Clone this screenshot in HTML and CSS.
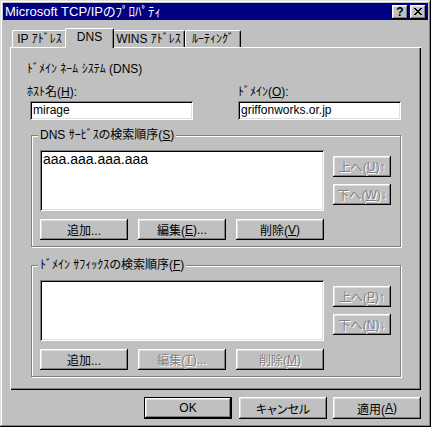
FILE: index.html
```html
<!DOCTYPE html>
<html lang="ja">
<head>
    <meta charset="UTF-8">
    <title>Microsoft TCP/IPのﾌﾟﾛﾊﾟﾃｨ</title>
    <link rel="stylesheet" href="styles.css">
</head>
<body>
<div class="window">
    <div class="titlebar">
        <span class="title">Microsoft TCP/IPのﾌﾟﾛﾊﾟﾃｨ</span>
        <span class="caption-btn help">?</span>
        <span class="caption-btn close">
            <svg width="8" height="7" viewBox="0 0 8 7" shape-rendering="crispEdges">
                <path d="M0 0h2v1h-2zM6 0h2v1h-2zM1 1h2v1h-2zM5 1h2v1h-2zM2 2h4v1h-4zM3 3h2v1h-2zM2 4h4v1h-4zM1 5h2v1h-2zM5 5h2v1h-2zM0 6h2v1h-2zM6 6h2v1h-2z" fill="#000"/>
            </svg>
        </span>
    </div>

    <div class="content">
        <div class="tabs">
            <div class="tab tab-ip">IP ｱﾄﾞﾚｽ</div>
            <div class="tab tab-dns active">DNS</div>
            <div class="tab tab-wins">WINS ｱﾄﾞﾚｽ</div>
            <div class="tab tab-route">ﾙｰﾃｨﾝｸﾞ</div>
        </div>

        <div class="panel">
            <div class="dns-title">ﾄﾞﾒｲﾝ ﾈｰﾑ ｼｽﾃﾑ (DNS)</div>

            <div class="fields">
                <div class="field host">
                    <div class="field-label">ﾎｽﾄ名(<u>H</u>):</div>
                    <div class="text-input">mirage</div>
                </div>
                <div class="field domain">
                    <div class="field-label">ﾄﾞﾒｲﾝ(<u>O</u>):</div>
                    <div class="text-input">griffonworks.or.jp</div>
                </div>
            </div>

            <!-- DNS server order -->
            <div class="group">
                <span class="legend">DNS ｻｰﾋﾞｽの検索順序(<u>S</u>)</span>
                <div class="list-col">
                    <div class="listbox">aaa.aaa.aaa.aaa</div>
                    <div class="btn-row">
                        <div class="btn">追加...</div>
                        <div class="btn">編集(<u>E</u>)...</div>
                        <div class="btn">削除(<u>V</u>)</div>
                    </div>
                </div>
                <div class="side-col">
                    <div class="btn side disabled">上へ(<u>U</u>)↑</div>
                    <div class="btn side disabled">下へ(<u>W</u>)↓</div>
                </div>
            </div>

            <!-- domain suffix order -->
            <div class="group second">
                <span class="legend">ﾄﾞﾒｲﾝ ｻﾌｨｯｸｽの検索順序(<u>F</u>)</span>
                <div class="list-col">
                    <div class="listbox"></div>
                    <div class="btn-row">
                        <div class="btn">追加...</div>
                        <div class="btn disabled">編集(<u>T</u>)...</div>
                        <div class="btn disabled">削除(<u>M</u>)</div>
                    </div>
                </div>
                <div class="side-col">
                    <div class="btn side disabled">上へ(<u>P</u>)↑</div>
                    <div class="btn side disabled">下へ(<u>N</u>)↓</div>
                </div>
            </div>
        </div>

        <div class="dialog-buttons">
            <div class="btn big default">OK</div>
            <div class="btn big">キャンセル</div>
            <div class="btn big">適用(<u>A</u>)</div>
        </div>
    </div>
</div>
</body>
</html>
```

FILE: styles.css
```css
* {
    box-sizing: border-box;
}

body {
    margin: 0;
    background: #c0c0c0;
    font-family: "Liberation Sans", "Noto Sans CJK JP", sans-serif;
    font-size: 12px;
    color: #000;
    font-feature-settings: "palt"; /* tight half-width dakuten */
}

u {
    text-decoration: underline;
    text-underline-offset: 1px;
}

/* window frame */
.window {
    width: 431px;
    height: 427px;
    padding: 3px;
    background: #c0c0c0;
    box-shadow: inset -1px -1px #000, inset 1px 1px #dfdfdf,
                inset -2px -2px #808080, inset 2px 2px #fff;
}

.titlebar {
    height: 17px;
    background: #000080;
    display: flex;
    align-items: center;
    padding: 0 2px 0 2px;
}

.title {
    flex: 1;
    color: #fff;
    font-size: 13px;
    line-height: 17px;
    white-space: nowrap;
}

.caption-btn {
    width: 16px;
    height: 14px;
    background: #c0c0c0;
    box-shadow: inset -1px -1px #000, inset 1px 1px #fff,
                inset -2px -2px #808080, inset 2px 2px #dfdfdf;
    display: flex;
    align-items: center;
    justify-content: center;
}

.caption-btn.help {
    font-family: "Liberation Sans", sans-serif;
    font-weight: bold;
    font-size: 12px;
    line-height: 14px;
    margin-right: 2px;
}

.content {
    padding: 0 7px;
}

/* tabs */
.tabs {
    display: flex;
    align-items: flex-end;
    margin-top: 8px;
    padding-left: 2px;
}

.tab {
    height: 17px;
    border-top: 1px solid #fff;
    border-left: 1px solid #fff;
    border-right: 1px solid #000;
    border-radius: 2px 2px 0 0;
    box-shadow: inset -1px 0 #808080;
    text-align: center;
    line-height: 16px;
    white-space: nowrap;
}

.tab-ip { width: 55px; }
.tab-dns { width: 45px; }
.tab-wins { width: 73px; }
.tab-route { width: 56px; }

.tab.active {
    height: 20px;
    margin: 0 -2px -1px;
    width: 49px;
    position: relative;
    z-index: 1;
    background: #c0c0c0;
    line-height: 16px;
    padding-bottom: 3px;
}

/* property page */
.panel {
    height: 343px;
    padding: 15px 0 0 17px;
    box-shadow: inset 1px 1px #fff, inset -1px -1px #000,
                inset -2px -2px #808080;
}

.dns-title {
    line-height: 14px;
    height: 14px;
}

.fields {
    display: flex;
    margin-top: 9px;
}

.field-label {
    height: 14px;
    line-height: 14px;
    margin-bottom: 2px;
}

.host {
    width: 166px;
}

.host .text-input {
    margin-left: 3px;
}

.domain {
    margin-left: 45px;
}

.text-input {
    width: 163px;
    height: 19px;
    background: #fff;
    padding: 0 3px;
    line-height: 19px;
    box-shadow: inset 1px 1px #808080, inset -1px -1px #fff,
                inset 2px 2px #000, inset -2px -2px #dfdfdf;
}

/* group boxes */
.group {
    position: relative;
    display: flex;
    width: 370px;
    height: 112px;
    margin: 15px 0 0 4px;
    padding: 14px 0 6px 8px;
    border: 1px solid #808080;
    box-shadow: inset 1px 1px #fff, 1px 1px #fff;
}

.group.second {
    margin-top: 18px;
}

.legend {
    position: absolute;
    left: 6px;
    top: -8px;
    padding: 0 2px;
    background: #c0c0c0;
    line-height: 14px;
    white-space: nowrap;
}

.list-col {
    width: 284px;
}

.listbox {
    height: 61px;
    background: #fff;
    padding: 2px 3px;
    font-size: 14px;
    line-height: 14px;
    box-shadow: inset 1px 1px #808080, inset -1px -1px #fff,
                inset 2px 2px #000, inset -2px -2px #dfdfdf;
}

.btn-row {
    display: flex;
    gap: 10px;
    margin-top: 8px;
}

.side-col {
    display: flex;
    flex-direction: column;
    gap: 7px;
    margin-left: 9px;
    padding-top: 6px;
}

/* push buttons */
.btn {
    width: 88px;
    height: 21px;
    display: flex;
    align-items: center;
    justify-content: center;
    background: #c0c0c0;
    white-space: nowrap;
    box-shadow: inset -1px -1px #000, inset 1px 1px #fff,
                inset -2px -2px #808080, inset 2px 2px #dfdfdf;
}

.btn.side {
    width: 58px;
}

.btn.disabled {
    color: #808080;
    text-shadow: 1px 1px #fff;
}

.dialog-buttons {
    display: flex;
    justify-content: flex-end;
    gap: 6px;
    margin-top: 7px;
}

.btn.big {
    height: 22px;
}

.btn.default {
    margin-right: 1px;
    box-shadow: inset 0 0 0 1px #000, inset -2px -2px #000, inset 2px 2px #fff,
                inset -3px -3px #808080, inset 3px 3px #dfdfdf;
}
```
